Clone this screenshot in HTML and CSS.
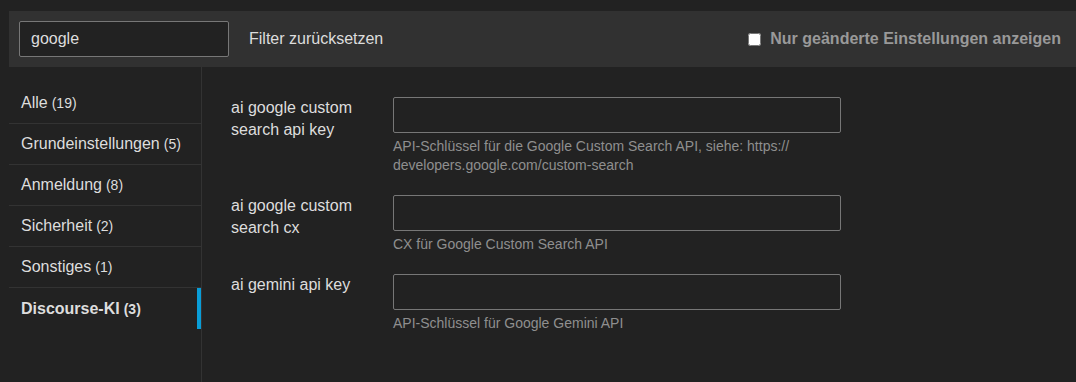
FILE: index.html
```html
<!DOCTYPE html>
<html lang="de">
<head>
    <meta charset="UTF-8">
    <meta name="viewport" content="width=device-width, initial-scale=1.0">
    <title>Einstellungen</title>
    <link rel="stylesheet" href="styles.css">
</head>
<body>
    <div class="admin">
        <div class="filters">
            <input type="text" class="filter-input" value="google">
            <a class="filter-reset" href="#">Filter zurücksetzen</a>
            <label class="only-changed">
                <input type="checkbox">
                Nur geänderte Einstellungen anzeigen
            </label>
        </div>

        <div class="main">
            <ul class="categories">
                <li><a href="#">Alle <span class="count">(19)</span></a></li>
                <li><a href="#">Grundeinstellungen <span class="count">(5)</span></a></li>
                <li><a href="#">Anmeldung <span class="count">(8)</span></a></li>
                <li><a href="#">Sicherheit <span class="count">(2)</span></a></li>
                <li><a href="#">Sonstiges <span class="count">(1)</span></a></li>
                <li class="active"><a href="#">Discourse-KI <span class="count">(3)</span></a></li>
            </ul>

            <div class="settings">
                <div class="setting">
                    <div class="setting-label">ai google custom search api key</div>
                    <div class="setting-value">
                        <input type="text">
                        <div class="desc">API-Schlüssel für die Google Custom Search API, siehe: https://<wbr>developers.google.com/custom-search</div>
                    </div>
                </div>
                <div class="setting">
                    <div class="setting-label">ai google custom search cx</div>
                    <div class="setting-value">
                        <input type="text">
                        <div class="desc">CX für Google Custom Search API</div>
                    </div>
                </div>
                <div class="setting">
                    <div class="setting-label">ai gemini api key</div>
                    <div class="setting-value">
                        <input type="text">
                        <div class="desc">API-Schlüssel für Google Gemini API</div>
                    </div>
                </div>
            </div>
        </div>
    </div>
</body>
</html>
```

FILE: styles.css
```css
body {
    margin: 0;
    background-color: #222;
    color: #ddd;
    font-family: "Liberation Sans", Arial, sans-serif;
}

.admin {
    padding: 11px 0 0 9px;
}

.filters {
    display: flex;
    align-items: center;
    height: 56px;
    padding: 0 15px 0 10px;
    background: #313131;
}

.filter-input {
    box-sizing: border-box;
    width: 210px;
    height: 36px;
    padding: 0 11px;
    background: #222;
    border: 1px solid #777;
    border-radius: 2px;
    color: #ddd;
    font-family: inherit;
    font-size: 16px;
}

.filter-reset {
    margin-left: 20px;
    color: #ddd;
    font-size: 16px;
    text-decoration: none;
}

.only-changed {
    margin-left: auto;
    display: flex;
    align-items: center;
    color: #999;
    font-size: 16px;
    font-weight: bold;
}

.only-changed input {
    width: 13px;
    height: 13px;
    margin: 0 9px 0 0;
    accent-color: #fff;
}

.main {
    display: flex;
    min-height: calc(100vh - 67px);
}

.categories {
    list-style: none;
    width: 192px;
    margin: 0;
    padding: 16px 0 0;
    border-right: 1px solid #333;
}

.categories li {
    height: 41px;
    border-bottom: 1px solid #333;
    box-sizing: border-box;
}

.categories li:last-child {
    border-bottom: none;
}

.categories a {
    display: flex;
    align-items: center;
    gap: 4px;
    height: 100%;
    padding-left: 12px;
    color: #ddd;
    font-size: 16px;
    text-decoration: none;
}

.categories .count {
    font-size: 14px;
}

.categories .active {
    border-right: 4px solid #099dd7;
}

.categories .active a {
    font-weight: bold;
}

.settings {
    padding: 30px 0 0 29px;
}

.setting {
    display: flex;
    margin-bottom: 20px;
}

.setting-label {
    width: 150px;
    padding-right: 12px;
    font-size: 16px;
    line-height: 22px;
}

.setting-value input {
    display: block;
    box-sizing: border-box;
    width: 448px;
    height: 36px;
    background: #222;
    border: 1px solid #777;
    border-radius: 2px;
    color: #ddd;
}

.desc {
    width: 448px;
    margin-top: 4px;
    color: #8f8f8f;
    font-size: 14px;
    line-height: 19px;
}
```
